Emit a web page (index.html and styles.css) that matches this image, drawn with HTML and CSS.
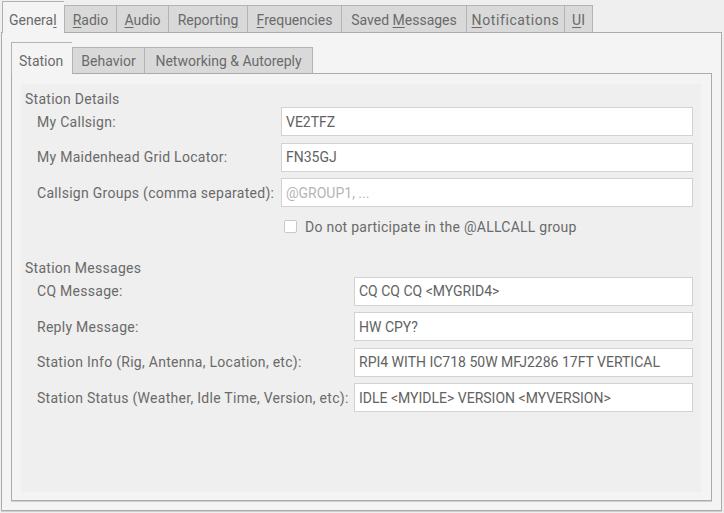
FILE: index.html
```html
<!DOCTYPE html>
<html>
<head>
<meta charset="utf-8">
<link rel="stylesheet" href="styles.css">
</head>
<body>
<div class="tabbar">
  <div class="tab active t-general"><span>Genera<u>l</u></span></div>
  <div class="tab t-radio"><span><u>R</u>adio</span></div>
  <div class="tab t-audio"><span><u>A</u>udio</span></div>
  <div class="tab t-reporting"><span>Reportin<u>g</u></span></div>
  <div class="tab t-freq"><span><u>F</u>requencies</span></div>
  <div class="tab t-saved"><span>Saved <u>M</u>essages</span></div>
  <div class="tab t-notif"><span><u>N</u>otifications</span></div>
  <div class="tab last t-ui"><span><u>U</u>I</span></div>
</div>
<div class="pane">
  <div class="subtabbar">
    <div class="stab active s-station"><span>Station</span></div>
    <div class="stab s-behavior"><span>Behavior</span></div>
    <div class="stab last s-net"><span>Networking &amp; Autoreply</span></div>
  </div>
  <div class="subpane">
    <div class="content">
      <div class="group-title">Station Details</div>
      <div class="form details">
        <div class="label">My Callsign:</div>
        <div class="input">VE2TFZ</div>
        <div class="label">My Maidenhead Grid Locator:</div>
        <div class="input">FN35GJ</div>
        <div class="label">Callsign Groups (comma separated):</div>
        <div class="input placeholder">@GROUP1, ...</div>
        <div class="label"></div>
        <div class="check"><span class="box"></span><span class="check-text">Do not participate in the @ALLCALL group</span></div>
      </div>
      <div class="group-title second">Station Messages</div>
      <div class="form messages">
        <div class="label">CQ Message:</div>
        <div class="input">CQ CQ CQ &lt;MYGRID4&gt;</div>
        <div class="label">Reply Message:</div>
        <div class="input">HW CPY?</div>
        <div class="label">Station Info (Rig, Antenna, Location, etc):</div>
        <div class="input">RPI4 WITH IC718 50W MFJ2286 17FT VERTICAL</div>
        <div class="label">Station Status (Weather, Idle Time, Version, etc):</div>
        <div class="input">IDLE &lt;MYIDLE&gt; VERSION &lt;MYVERSION&gt;</div>
      </div>
    </div>
  </div>
</div>
</body>
</html>
```
FILE: styles.css
```css
html, body {
  margin: 0;
  padding: 0;
}
body {
  width: 724px;
  height: 513px;
  background: #efefef;
  font-family: Roboto, "Liberation Sans", sans-serif;
  font-size: 14px;
  color: #6a6a6a;
  display: flex;
  flex-direction: column;
  overflow: hidden;
}
u {
  text-decoration: underline;
  text-decoration-thickness: 1px;
  text-underline-offset: 2px;
}
.tabbar {
  height: 32px;
  display: flex;
  align-items: flex-end;
  padding-left: 2px;
  flex: none;
}
.tab {
  height: 27px;
  box-sizing: border-box;
  border: 1px solid #b4b4b4;
  border-bottom: none;
  border-right: none;
  background: #d9d9d9;
  display: flex;
  align-items: center;
  justify-content: center;
  padding-top: 1px;
  white-space: nowrap;
  flex: none;
}
.tab.last {
  border-right: 1px solid #b4b4b4;
}
.tab.active {
  height: 32px;
  margin-bottom: -1px;
  background: #f4f4f4;
  padding-top: 5px;
  position: relative;
  z-index: 1;
  border-color: #b0b0b0;
  justify-content: flex-start;
  padding-left: 6px;
}
.t-general { width: 62px; }
.t-radio { width: 52px; }
.t-audio { width: 52px; }
.t-reporting { width: 79px; }
.t-freq { width: 94px; }
.t-saved { width: 125px; }
.t-notif { width: 98px; }
.t-notif span { letter-spacing: 0.6px; }
.t-ui { width: 29px; }
.pane {
  flex: 1;
  margin: 0 2px 2px 1px;
  border: 1px solid #ababab;
  box-shadow: 0 1px 0 #cfcfcf;
  background: #f4f4f4;
  padding: 9px;
  display: flex;
  flex-direction: column;
  min-height: 0;
}
.subtabbar {
  height: 31px;
  display: flex;
  align-items: flex-end;
  flex: none;
}
.stab {
  height: 26px;
  box-sizing: border-box;
  border: 1px solid #b4b4b4;
  border-bottom: none;
  border-right: none;
  background: #d9d9d9;
  display: flex;
  align-items: center;
  justify-content: center;
  white-space: nowrap;
  flex: none;
}
.stab.last {
  border-right: 1px solid #b4b4b4;
}
.stab.active {
  height: 32px;
  margin-bottom: -1px;
  background: #f4f4f4;
  padding-top: 5px;
  padding-left: 7px;
  justify-content: flex-start;
  position: relative;
  z-index: 1;
}
.s-station { width: 61px; }
.s-behavior { width: 72px; }
.s-net { width: 169px; }
.subpane {
  flex: 1;
  border: 1px solid #ababab;
  box-shadow: 0 1px 0 #cfcfcf;
  background: #f4f4f4;
  padding: 10px 10px 8px 9px;
  display: flex;
  flex-direction: column;
  min-height: 0;
}
.content {
  flex: 1;
  background: #efefef;
  padding: 7px 8px 0 4px;
}
.group-title {
  height: 16px;
  line-height: 16px;
  letter-spacing: 0.27px;
}
.group-title.second {
  margin-top: 23px;
  margin-bottom: 1px;
}
.form {
  display: grid;
  row-gap: 6.5px;
  padding-left: 12px;
  align-items: center;
}
.form.details {
  grid-template-columns: 244px 1fr;
}
.form.messages {
  grid-template-columns: 317px 1fr;
}
.label {
  white-space: nowrap;
  letter-spacing: 0.28px;
}
.input {
  height: 29px;
  box-sizing: border-box;
  background: #ffffff;
  border: 1px solid #d2d2d2;
  padding-left: 4px;
  display: flex;
  align-items: center;
  color: #626262;
  white-space: nowrap;
}
.input.placeholder {
  color: #b5b5b5;
}
.check {
  display: flex;
  align-items: center;
  padding-left: 3px;
  margin-top: 3px;
  height: 20px;
}
.check-text {
  letter-spacing: 0.25px;
}
.box {
  width: 13px;
  height: 13px;
  box-sizing: border-box;
  border: 1px solid #c9c9c9;
  background: #ffffff;
  border-radius: 2px;
  margin-right: 8px;
}
```
